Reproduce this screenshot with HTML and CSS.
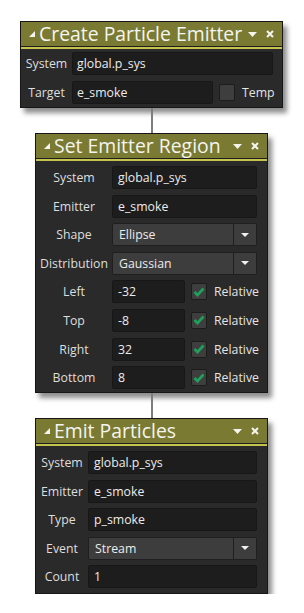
FILE: index.html
```html
<!DOCTYPE html>
<html lang="en">
<head>
    <meta charset="UTF-8">
    <title>Particle Actions</title>
    <link rel="stylesheet" href="styles.css">
</head>
<body>

<div class="canvas">

    <!-- Create Particle Emitter -->
    <div class="node node-wide">
        <div class="node-title">
            <svg class="collapse" width="6" height="6" viewBox="0 0 6 6"><polygon points="6,0 6,6 0,6"/></svg>
            <span class="title-text">Create Particle Emitter</span>
            <svg class="menu" width="9" height="5" viewBox="0 0 9 5"><polygon points="0,0 9,0 4.5,5"/></svg>
            <svg class="close" width="8" height="8" viewBox="0 0 8 8"><path d="M1 1L7 7M7 1L1 7"/></svg>
        </div>
        <div class="node-body body-wide">
            <div class="row">
                <span class="label">System</span>
                <div class="field">global.p_sys</div>
            </div>
            <div class="row">
                <span class="label">Target</span>
                <div class="field field-target">e_smoke</div>
                <span class="check"></span>
                <span class="check-label">Temp</span>
            </div>
        </div>
    </div>

    <div class="link"></div>

    <!-- Set Emitter Region -->
    <div class="node node-narrow">
        <div class="node-title">
            <svg class="collapse" width="6" height="6" viewBox="0 0 6 6"><polygon points="6,0 6,6 0,6"/></svg>
            <span class="title-text">Set Emitter Region</span>
            <svg class="menu" width="9" height="5" viewBox="0 0 9 5"><polygon points="0,0 9,0 4.5,5"/></svg>
            <svg class="close" width="8" height="8" viewBox="0 0 8 8"><path d="M1 1L7 7M7 1L1 7"/></svg>
        </div>
        <div class="node-body body-region">
            <div class="row">
                <span class="label">System</span>
                <div class="field">global.p_sys</div>
            </div>
            <div class="row">
                <span class="label">Emitter</span>
                <div class="field">e_smoke</div>
            </div>
            <div class="row">
                <span class="label">Shape</span>
                <div class="select">
                    <span class="select-value">Ellipse</span>
                    <span class="select-btn"><svg width="8" height="4" viewBox="0 0 8 4"><polygon points="0,0 8,0 4,4"/></svg></span>
                </div>
            </div>
            <div class="row">
                <span class="label">Distribution</span>
                <div class="select">
                    <span class="select-value">Gaussian</span>
                    <span class="select-btn"><svg width="8" height="4" viewBox="0 0 8 4"><polygon points="0,0 8,0 4,4"/></svg></span>
                </div>
            </div>
            <div class="row">
                <span class="label">Left</span>
                <div class="field field-num">-32</div>
                <span class="check checked"><svg width="12" height="10" viewBox="0 0 12 10"><path d="M1.5 5L4.5 8L10.5 1.5"/></svg></span>
                <span class="check-label">Relative</span>
            </div>
            <div class="row">
                <span class="label">Top</span>
                <div class="field field-num">-8</div>
                <span class="check checked"><svg width="12" height="10" viewBox="0 0 12 10"><path d="M1.5 5L4.5 8L10.5 1.5"/></svg></span>
                <span class="check-label">Relative</span>
            </div>
            <div class="row">
                <span class="label">Right</span>
                <div class="field field-num">32</div>
                <span class="check checked"><svg width="12" height="10" viewBox="0 0 12 10"><path d="M1.5 5L4.5 8L10.5 1.5"/></svg></span>
                <span class="check-label">Relative</span>
            </div>
            <div class="row">
                <span class="label">Bottom</span>
                <div class="field field-num">8</div>
                <span class="check checked"><svg width="12" height="10" viewBox="0 0 12 10"><path d="M1.5 5L4.5 8L10.5 1.5"/></svg></span>
                <span class="check-label">Relative</span>
            </div>
        </div>
    </div>

    <div class="link"></div>

    <!-- Emit Particles -->
    <div class="node node-narrow">
        <div class="node-title">
            <svg class="collapse" width="6" height="6" viewBox="0 0 6 6"><polygon points="6,0 6,6 0,6"/></svg>
            <span class="title-text">Emit Particles</span>
            <svg class="menu" width="9" height="5" viewBox="0 0 9 5"><polygon points="0,0 9,0 4.5,5"/></svg>
            <svg class="close" width="8" height="8" viewBox="0 0 8 8"><path d="M1 1L7 7M7 1L1 7"/></svg>
        </div>
        <div class="node-body body-emit">
            <div class="row">
                <span class="label">System</span>
                <div class="field">global.p_sys</div>
            </div>
            <div class="row">
                <span class="label">Emitter</span>
                <div class="field">e_smoke</div>
            </div>
            <div class="row">
                <span class="label">Type</span>
                <div class="field">p_smoke</div>
            </div>
            <div class="row">
                <span class="label">Event</span>
                <div class="select">
                    <span class="select-value">Stream</span>
                    <span class="select-btn"><svg width="8" height="4" viewBox="0 0 8 4"><polygon points="0,0 8,0 4,4"/></svg></span>
                </div>
            </div>
            <div class="row">
                <span class="label">Count</span>
                <div class="field">1</div>
            </div>
        </div>
    </div>

</div>

</body>
</html>
```

FILE: styles.css
```css
body {
    margin: 0;
    padding: 0;
    background-color: #ffffff;
    font-family: "Open Sans", "DejaVu Sans", sans-serif;
}

.canvas {
    display: flex;
    flex-direction: column;
    align-items: flex-start;
    padding: 21px 0 0 20px;
}

/* Knoten */
.node {
    background-color: #2a2a2a;
    border: 1px solid #161616;
    box-shadow: 4px 5px 5px rgba(0, 0, 0, 0.45);
    box-sizing: border-box;
}

.node-wide {
    width: 263px;
}

.node-narrow {
    width: 233px;
    margin-left: 15px;
}

.node-title {
    display: flex;
    align-items: center;
    height: 24px;
    padding: 0 8px 0 8px;
    background-color: #7a7a32;
    border-bottom: 1px solid #1e1e1e;
    box-shadow: 0 2px 0 #c4c44c;
    margin-bottom: 2px;
    color: #f4f4f0;
}

.collapse {
    fill: #f4f4f0;
    margin-right: 4px;
    flex: none;
}

.title-text {
    font-size: 19.4px;
    line-height: 24px;
    white-space: nowrap;
}

.menu {
    fill: #f4f4f0;
    margin-left: auto;
    flex: none;
}

.close {
    stroke: #f4f4f0;
    stroke-width: 2;
    margin-left: 9px;
    flex: none;
}

/* Inhalt */
.node-body {
    display: flex;
    flex-direction: column;
    gap: 5.6px;
}

.body-wide {
    padding: 3px 9px 3px 0;
    gap: 6px;
}

.body-region {
    padding: 5px 10px 3px 0;
}

.body-emit {
    padding: 5px 10px 5px 0;
    gap: 5.5px;
}

.row {
    display: flex;
    align-items: center;
    height: 23px;
}

.label {
    flex: none;
    text-align: center;
    font-size: 12.3px;
    color: #dedede;
}

.body-wide .label {
    width: 51px;
}

.body-region .label {
    width: 76px;
}

.body-emit .label {
    width: 52px;
}

.field {
    flex: 1;
    height: 23px;
    box-sizing: border-box;
    background-color: #1d1d1d;
    border: 1px solid #171717;
    border-radius: 2px;
    padding-left: 4px;
    font-size: 12.3px;
    line-height: 21px;
    color: #ececec;
}

.body-region .field, .body-emit .field {
    padding-left: 5px;
}

.field-target {
    flex: none;
    width: 141px;
}

.field-num {
    flex: none;
    width: 73px;
}

.check {
    flex: none;
    width: 16px;
    height: 17px;
    box-sizing: border-box;
    margin-left: 6px;
    background-color: #3e3e3e;
    border: 1px solid #1c1c1c;
    border-radius: 2px;
    display: flex;
    align-items: center;
    justify-content: center;
}

.check svg {
    fill: none;
    stroke: #1fa05c;
    stroke-width: 2.6;
}

.check-label {
    margin-left: 7px;
    font-size: 12.3px;
    color: #e4e4e4;
    white-space: nowrap;
}

.select {
    flex: 1;
    display: flex;
    height: 23px;
}

.select-value {
    flex: 1;
    box-sizing: border-box;
    background-color: #3d3d3d;
    border: 1px solid #1f1f1f;
    border-radius: 2px 0 0 2px;
    padding-left: 6px;
    font-size: 12.3px;
    line-height: 21px;
    color: #ececec;
}

.select-btn {
    flex: none;
    width: 23px;
    box-sizing: border-box;
    background-color: #3d3d3d;
    border: 1px solid #1f1f1f;
    border-left: none;
    border-radius: 0 2px 2px 0;
    display: flex;
    align-items: center;
    justify-content: center;
}

.select-btn svg {
    fill: #f0f0f0;
}

/* Verbindungslinie */
.link {
    width: 2px;
    height: 25px;
    margin-left: 131px;
    background-color: #7c7c7c;
}
```
